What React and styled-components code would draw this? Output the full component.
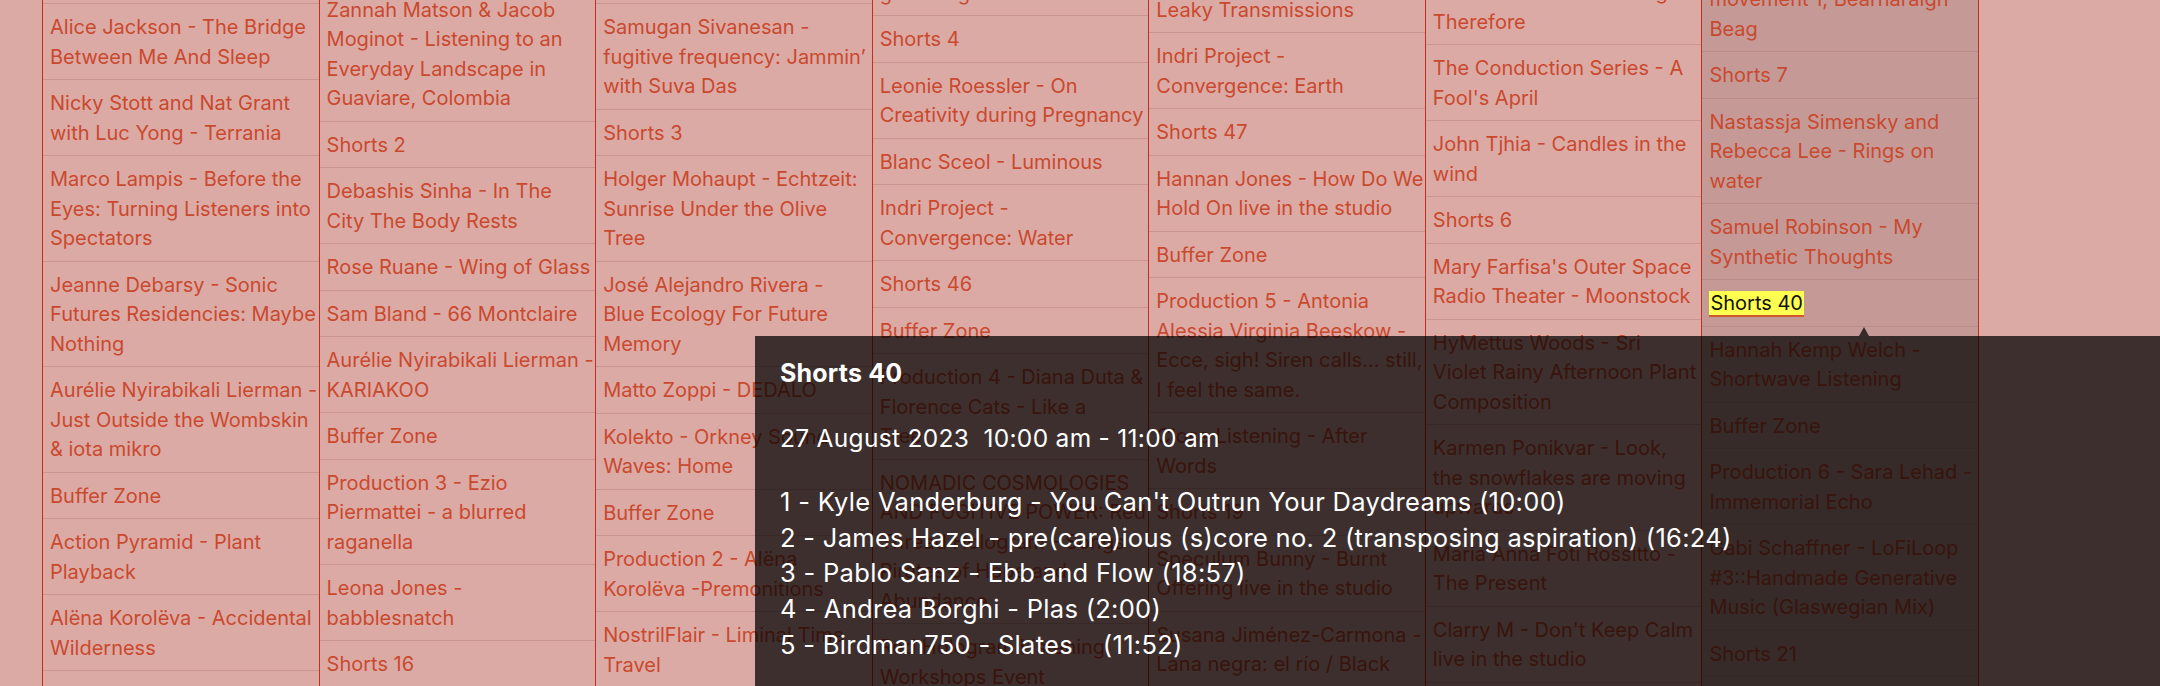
import React from "react";
import styled, { createGlobalStyle } from "styled-components";

const GlobalStyle = createGlobalStyle`
    body {
        margin: 0;
        background: #dcaaa5;
        overflow: hidden;
    }
`;

const Page = styled.div`
    position: relative;
    width: 2160px;
    height: 686px;
    overflow: hidden;
    background: #dcaaa5;
    font-family: Inter, "Liberation Sans", sans-serif;
`;

const Board = styled.div`
    display: grid;
    grid-template-columns: repeat(7, 1fr);
    width: 1936px;
    height: 686px;
    margin-left: 42px;
    border-right: 1px solid #c22d1c;
`;

const Column = styled.div`
    overflow: hidden;
    border-left: 1px solid #c22d1c;
    background: ${(props) => (props.$active ? "#c59a96" : "transparent")};
`;

const List = styled.div`
    margin-top: ${(props) => props.$offset}px;
`;

const Row = styled.div`
    padding: 9px 7px 7px 7px;
    border-bottom: 1px solid ${(props) => (props.$active ? "#b98c88" : "#c99590")};
    font-size: 20px;
    line-height: 29.5px;
    color: #c9492e;
`;

const Line = styled.span`
    display: block;
    white-space: nowrap;
`;

const Mark = styled.span`
    background: #ffff4f;
    color: #111;
    border-bottom: 2px solid #d2582f;
    padding: 0 1px;
`;

const Tooltip = styled.div`
    position: absolute;
    left: 755px;
    top: 336px;
    right: -40px;
    bottom: -40px;
    padding: 22px 25px;
    background: rgba(0, 0, 0, 0.72);
    color: #fff;
    font-family: Inter, "Open Sans", sans-serif;

    &::before {
        content: "";
        position: absolute;
        top: -9px;
        left: 1104px;
        border-left: 5px solid transparent;
        border-right: 5px solid transparent;
        border-bottom: 9px solid rgba(0, 0, 0, 0.72);
    }
`;

const TipTitle = styled.div`
    font-size: 25px;
    font-weight: 700;
    line-height: 30px;
    letter-spacing: 0.2px;
`;

const TipDate = styled.div`
    margin-top: 34px;
    font-size: 24.5px;
    line-height: 32px;
    white-space: pre;
    letter-spacing: 0.3px;
`;

const TrackList = styled.div`
    margin-top: 30px;
    font-size: 25.5px;
    line-height: 35.7px;
    white-space: pre;
    letter-spacing: 0.3px;
`;

const columns = [
    {
        offset: -42.5,
        rows: [
            ["Shorts 1"],
            ["Alice Jackson - The Bridge", "Between Me And Sleep"],
            ["Nicky Stott and Nat Grant", "with Luc Yong - Terrania"],
            ["Marco Lampis - Before the", "Eyes: Turning Listeners into", "Spectators"],
            ["Jeanne Debarsy - Sonic", "Futures Residencies: Maybe", "Nothing"],
            ["Aurélie Nyirabikali Lierman -", "Just Outside the Wombskin", "& iota mikro"],
            ["Buffer Zone"],
            ["Action Pyramid - Plant", "Playback"],
            ["Alëna Korolëva - Accidental", "Wilderness"],
        ],
    },
    {
        offset: -13.5,
        rows: [
            ["Zannah Matson & Jacob", "Moginot - Listening to an", "Everyday Landscape in", "Guaviare, Colombia"],
            ["Shorts 2"],
            ["Debashis Sinha - In The", "City The Body Rests"],
            ["Rose Ruane - Wing of Glass"],
            ["Sam Bland - 66 Montclaire"],
            ["Aurélie Nyirabikali Lierman -", "KARIAKOO"],
            ["Buffer Zone"],
            ["Production 3 - Ezio", "Piermattei - a blurred", "raganella"],
            ["Leona Jones -", "babblesnatch"],
            ["Shorts 16"],
        ],
    },
    {
        offset: -42.5,
        rows: [
            ["Buffer Zone"],
            ["Samugan Sivanesan -", "fugitive frequency: Jammin’", "with Suva Das"],
            ["Shorts 3"],
            ["Holger Mohaupt - Echtzeit:", "Sunrise Under the Olive", "Tree"],
            ["José Alejandro Rivera -", "Blue Ecology For Future", "Memory"],
            ["Matto Zoppi - DEDALO"],
            ["Kolekto - Orkney Sound", "Waves: Home"],
            ["Buffer Zone"],
            ["Production 2 - Alëna", "Korolëva -Premonitions"],
            ["NostrilFlair - Liminal Time", "Travel"],
        ],
    },
    {
        offset: -60,
        rows: [
            ["Hannah Imlach - Listening", "gatherings"],
            ["Shorts 4"],
            ["Leonie Roessler - On", "Creativity during Pregnancy"],
            ["Blanc Sceol - Luminous"],
            ["Indri Project -", "Convergence: Water"],
            ["Shorts 46"],
            ["Buffer Zone"],
            ["Production 4 - Diana Duta &", "Florence Cats - Like a", "Tree"],
            ["NOMADIC COSMOLOGIES", "AND FUGITIVE POWER: Red", "Thread Hologram - Songs", "Pirates of Hope and", "Abundance"],
            ["Red Hologram Listening", "Workshops Event"],
        ],
    },
    {
        offset: -43,
        rows: [
            ["Ecoacoustics Collective -", "Leaky Transmissions"],
            ["Indri Project -", "Convergence: Earth"],
            ["Shorts 47"],
            ["Hannan Jones - How Do We", "Hold On live in the studio"],
            ["Buffer Zone"],
            ["Production 5 - Antonia", "Alessia Virginia Beeskow -", "Ecce, sigh! Siren calls... still,", "I feel the same."],
            ["Close Listening - After", "Words"],
            ["Shorts 19"],
            ["Speculum Bunny - Burnt", "Offering live in the studio"],
            ["Susana Jiménez-Carmona -", "Lana negra: el río / Black", "River"],
        ],
    },
    {
        offset: -31,
        rows: [
            ["Jasmine Guffond - Things", "Therefore"],
            ["The Conduction Series - A", "Fool's April"],
            ["John Tjhia - Candles in the", "wind"],
            ["Shorts 6"],
            ["Mary Farfisa's Outer Space", "Radio Theater - Moonstock"],
            ["HyMettus Woods - Sri", "Violet Rainy Afternoon Plant", "Composition"],
            ["Karmen Ponikvar - Look,", "the snowflakes are moving", "upwards"],
            ["Maria Anna Foti Rossitto -", "The Present"],
            ["Clarry M - Don't Keep Calm", "live in the studio"],
            ["Shorts 20"],
        ],
    },
    {
        offset: -53.5,
        active: true,
        rows: [
            ["Lisa Hall - Tidal Sketches:", "movement 1, Bearnaraigh", "Beag"],
            ["Shorts 7"],
            ["Nastassja Simensky and", "Rebecca Lee - Rings on", "water"],
            ["Samuel Robinson - My", "Synthetic Thoughts"],
            ["Shorts 40"],
            ["Hannah Kemp Welch -", "Shortwave Listening"],
            ["Buffer Zone"],
            ["Production 6 - Sara Lehad -", "Immemorial Echo"],
            ["Gabi Schaffner - LoFiLoop", "#3::Handmade Generative", "Music (Glaswegian Mix)"],
            ["Shorts 21"],
            ["Buffer Zone"],
        ],
    },
];

const tracks = [
    "1 - Kyle Vanderburg - You Can't Outrun Your Daydreams (10:00)",
    "2 - James Hazel - pre(care)ious (s)core no. 2 (transposing aspiration) (16:24)",
    "3 - Pablo Sanz - Ebb and Flow (18:57)",
    "4 - Andrea Borghi - Plas (2:00)",
    "5 - Birdman750 - Slates    (11:52)",
];

function App() {
    return (
        <Page>
            <GlobalStyle />
            <Board>
                {columns.map((col, i) => (
                    <Column key={i} $active={col.active}>
                        <List $offset={col.offset}>
                            {col.rows.map((lines, j) => (
                                <Row key={j} $active={col.active}>
                                    {lines.map((text) =>
                                        text === "Shorts 40" ? (
                                            <Line key={text}>
                                                <Mark>{text}</Mark>
                                            </Line>
                                        ) : (
                                            <Line key={text}>{text}</Line>
                                        )
                                    )}
                                </Row>
                            ))}
                        </List>
                    </Column>
                ))}
            </Board>

            <Tooltip>
                <TipTitle>Shorts 40</TipTitle>
                <TipDate>27 August 2023  10:00 am - 11:00 am</TipDate>
                <TrackList>
                    {tracks.map((t) => (
                        <div key={t}>{t}</div>
                    ))}
                </TrackList>
            </Tooltip>
        </Page>
    );
}

export default App;
